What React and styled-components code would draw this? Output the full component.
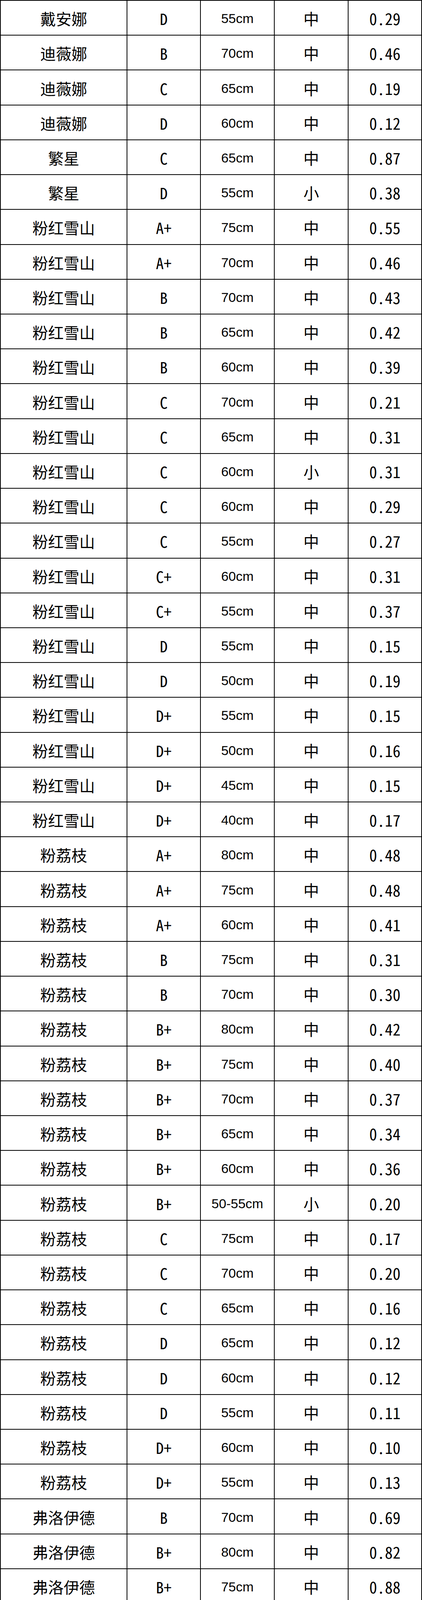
import React from "react";
import styled, { createGlobalStyle } from "styled-components";

const GlobalStyle = createGlobalStyle`
	html, body {
		margin: 0;
		padding: 0;
		background: #fff;
	}
	* {
		box-sizing: border-box;
	}
`;

const rows = [
	["戴安娜", "D", "55cm", "中", "0.29"],
	["迪薇娜", "B", "70cm", "中", "0.46"],
	["迪薇娜", "C", "65cm", "中", "0.19"],
	["迪薇娜", "D", "60cm", "中", "0.12"],
	["繁星", "C", "65cm", "中", "0.87"],
	["繁星", "D", "55cm", "小", "0.38"],
	["粉红雪山", "A+", "75cm", "中", "0.55"],
	["粉红雪山", "A+", "70cm", "中", "0.46"],
	["粉红雪山", "B", "70cm", "中", "0.43"],
	["粉红雪山", "B", "65cm", "中", "0.42"],
	["粉红雪山", "B", "60cm", "中", "0.39"],
	["粉红雪山", "C", "70cm", "中", "0.21"],
	["粉红雪山", "C", "65cm", "中", "0.31"],
	["粉红雪山", "C", "60cm", "小", "0.31"],
	["粉红雪山", "C", "60cm", "中", "0.29"],
	["粉红雪山", "C", "55cm", "中", "0.27"],
	["粉红雪山", "C+", "60cm", "中", "0.31"],
	["粉红雪山", "C+", "55cm", "中", "0.37"],
	["粉红雪山", "D", "55cm", "中", "0.15"],
	["粉红雪山", "D", "50cm", "中", "0.19"],
	["粉红雪山", "D+", "55cm", "中", "0.15"],
	["粉红雪山", "D+", "50cm", "中", "0.16"],
	["粉红雪山", "D+", "45cm", "中", "0.15"],
	["粉红雪山", "D+", "40cm", "中", "0.17"],
	["粉荔枝", "A+", "80cm", "中", "0.48"],
	["粉荔枝", "A+", "75cm", "中", "0.48"],
	["粉荔枝", "A+", "60cm", "中", "0.41"],
	["粉荔枝", "B", "75cm", "中", "0.31"],
	["粉荔枝", "B", "70cm", "中", "0.30"],
	["粉荔枝", "B+", "80cm", "中", "0.42"],
	["粉荔枝", "B+", "75cm", "中", "0.40"],
	["粉荔枝", "B+", "70cm", "中", "0.37"],
	["粉荔枝", "B+", "65cm", "中", "0.34"],
	["粉荔枝", "B+", "60cm", "中", "0.36"],
	["粉荔枝", "B+", "50-55cm", "小", "0.20"],
	["粉荔枝", "C", "75cm", "中", "0.17"],
	["粉荔枝", "C", "70cm", "中", "0.20"],
	["粉荔枝", "C", "65cm", "中", "0.16"],
	["粉荔枝", "D", "65cm", "中", "0.12"],
	["粉荔枝", "D", "60cm", "中", "0.12"],
	["粉荔枝", "D", "55cm", "中", "0.11"],
	["粉荔枝", "D+", "60cm", "中", "0.10"],
	["粉荔枝", "D+", "55cm", "中", "0.13"],
	["弗洛伊德", "B", "70cm", "中", "0.69"],
	["弗洛伊德", "B+", "80cm", "中", "0.82"],
	["弗洛伊德", "B+", "75cm", "中", "0.88"],
	["弗洛伊德", "B+", "70cm", "中", "0.90"],
	["弗洛伊德", "B+", "70cm", "小", "0.89"],
	["弗洛伊德", "B+", "60-75cm", "中", "0.80"],
	["弗洛伊德", "C", "75cm", "中", "0.29"],
	["弗洛伊德", "C", "70cm", "中", "0.28"],
	["弗洛伊德", "C", "65cm", "中", "0.32"],
	["弗洛伊德", "C", "60cm", "中", "0.38"],
	["弗洛伊德", "C", "55cm", "中", "0.37"],
	["弗洛伊德", "D", "60cm", "中", "0.14"],
	["弗洛伊德", "D", "55cm", "中", "0.15"],
	["弗洛伊德", "D", "50cm", "中", "0.13"],
	["弗洛伊德", "D", "45cm", "中", "0.11"],
	["弗洛伊德", "D+", "50cm", "中", "0.14"],
	["弗洛伊德", "D+", "45cm", "中", "0.12"],
	["高胜", "C", "70cm", "中", "0.29"],
	["高原红", "B", "80cm", "中", "0.47"],
	["高原红", "B", "75cm", "中", "0.50"],
	["高原红", "B", "70cm", "中", "0.41"],
	["高原红", "C", "80cm", "中", "0.24"],
	["高原红", "C", "75cm", "中", "0.23"],
];

const fonts = {
	cjk: `"Noto Sans CJK SC", "Noto Sans", sans-serif`,
	mono: `"Noto Sans Mono CJK SC", "Noto Sans CJK SC", monospace`,
	latin: `"Liberation Sans", Arial, sans-serif`,
};

const kinds = ["cjk", "mono", "latin", "cjk", "mono"];

const Sheet = styled.div`
	width: 1080px;
	height: 5890px;
	display: flex;
	flex-direction: column;
	border-top: 2px solid #000;
	border-left: 2px solid #000;
	background: #fff;
	color: #000;
	overflow: hidden;
`;

const Row = styled.div`
	flex: 1 1 0;
	min-height: 0;
	display: grid;
	grid-template-columns: 324px 188px 189px 189px 188px;
`;

const Cell = styled.div`
	display: flex;
	align-items: center;
	justify-content: center;
	border-right: 2px solid #000;
	border-bottom: 2px solid #000;
	padding-top: 3px;
	font-family: ${(p) => fonts[p.$kind]};
	font-size: ${(p) => (p.$kind === "latin" ? "34px" : "40px")};
	line-height: 1;
	white-space: nowrap;
`;

export default function App() {
	return (
		<>
			<GlobalStyle />
			<Sheet>
				{rows.map((row, i) => (
					<Row key={i}>
						{row.map((text, j) => (
							<Cell key={j} $kind={kinds[j]}>
								{text}
							</Cell>
						))}
					</Row>
				))}
			</Sheet>
		</>
	);
}
